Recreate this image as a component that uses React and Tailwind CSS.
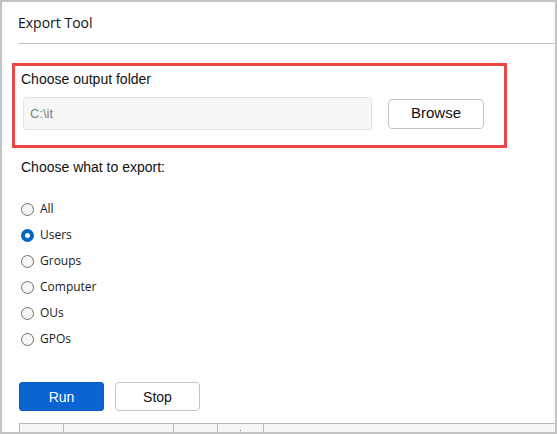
import React from 'react';

const options = ['All', 'Users', 'Groups', 'Computer', 'OUs', 'GPOs'];

const Radio = ({ checked }) =>
  checked ? (
    <div className="w-[13px] h-[13px] rounded-full bg-[#0067c0] flex items-center justify-center shrink-0">
      <div className="w-[5px] h-[5px] rounded-full bg-white"></div>
    </div>
  ) : (
    <div className="w-[13px] h-[13px] rounded-full border border-[#707070] bg-[#f6f6f6] shrink-0"></div>
  );

const App = () => {
  return (
    <div className="w-[557px] h-[434px] border-2 border-[#c3c3c3] bg-white flex flex-col overflow-hidden text-[#111]">
      {/* Title */}
      <div className="ml-[16px] pt-[11px] pb-[10px] border-b border-[#c3c3c3]">
        <div className="text-[14px] leading-[20px] font-['Open_Sans',sans-serif]">Export Tool</div>
      </div>

      {/* Output folder (highlighted) */}
      <div className="ml-[10px] mt-[19px] w-[495px] border-[3px] border-[#ef4444] pt-[5px] pl-[6px] pb-[15px] font-['Liberation_Sans',Arial,sans-serif]">
        <div className="text-[14px] leading-[16px]">Choose output folder</div>
        <div className="flex items-center mt-[10px] ml-[2px]">
          <div className="w-[349px] h-[33px] bg-[#f7f7f7] border border-[#e2e2e2] rounded-[3px] flex items-center pl-[6px] text-[13px] text-[#808080]">
            C:\it
          </div>
          <button className="ml-[16px] w-[96px] h-[30px] bg-white border border-[#c4c4c4] rounded-[4px] text-[15px] text-[#111]">
            Browse
          </button>
        </div>
      </div>

      {/* Export choice */}
      <div className="pl-[19px] mt-[11px] text-[14px] leading-[16px] font-['Liberation_Sans',Arial,sans-serif]">
        Choose what to export:
      </div>
      <div className="pl-[19px] mt-[21px] flex flex-col">
        {options.map((o) => (
          <div key={o} className="h-[26px] flex items-center gap-[6px]">
            <Radio checked={o === 'Users'} />
            <span className="text-[12px] font-['Open_Sans',sans-serif] text-[#1a1a1a]">{o}</span>
          </div>
        ))}
      </div>

      {/* Actions */}
      <div className="pl-[17px] mt-[30px] flex gap-[11px] font-['Liberation_Sans',Arial,sans-serif]">
        <button className="w-[85px] h-[29px] pt-[1px] bg-[#0b64d2] border border-[#0a5cc2] rounded-[3px] text-white text-[14px]">
          Run
        </button>
        <button className="w-[85px] h-[29px] pt-[1px] bg-white border border-[#c4c4c4] rounded-[4px] text-[#111] text-[14px]">
          Stop
        </button>
      </div>

      {/* Results table header */}
      <div className="ml-[17px] mt-[12px] flex-1 border-t border-[#b8b8b8] bg-[#f6f6f6] flex">
        <div className="w-[44px] border-l border-[#b8b8b8]"></div>
        <div className="w-[110px] border-l border-[#b8b8b8]"></div>
        <div className="w-[44px] border-l border-[#b8b8b8]"></div>
        <div className="w-[46px] border-l border-[#b8b8b8] relative">
          <div className="absolute left-[22px] bottom-[1px] w-[1px] h-[1px] bg-[#777]"></div>
        </div>
        <div className="flex-1 border-l border-[#b8b8b8]"></div>
      </div>
    </div>
  );
};

export default App;
